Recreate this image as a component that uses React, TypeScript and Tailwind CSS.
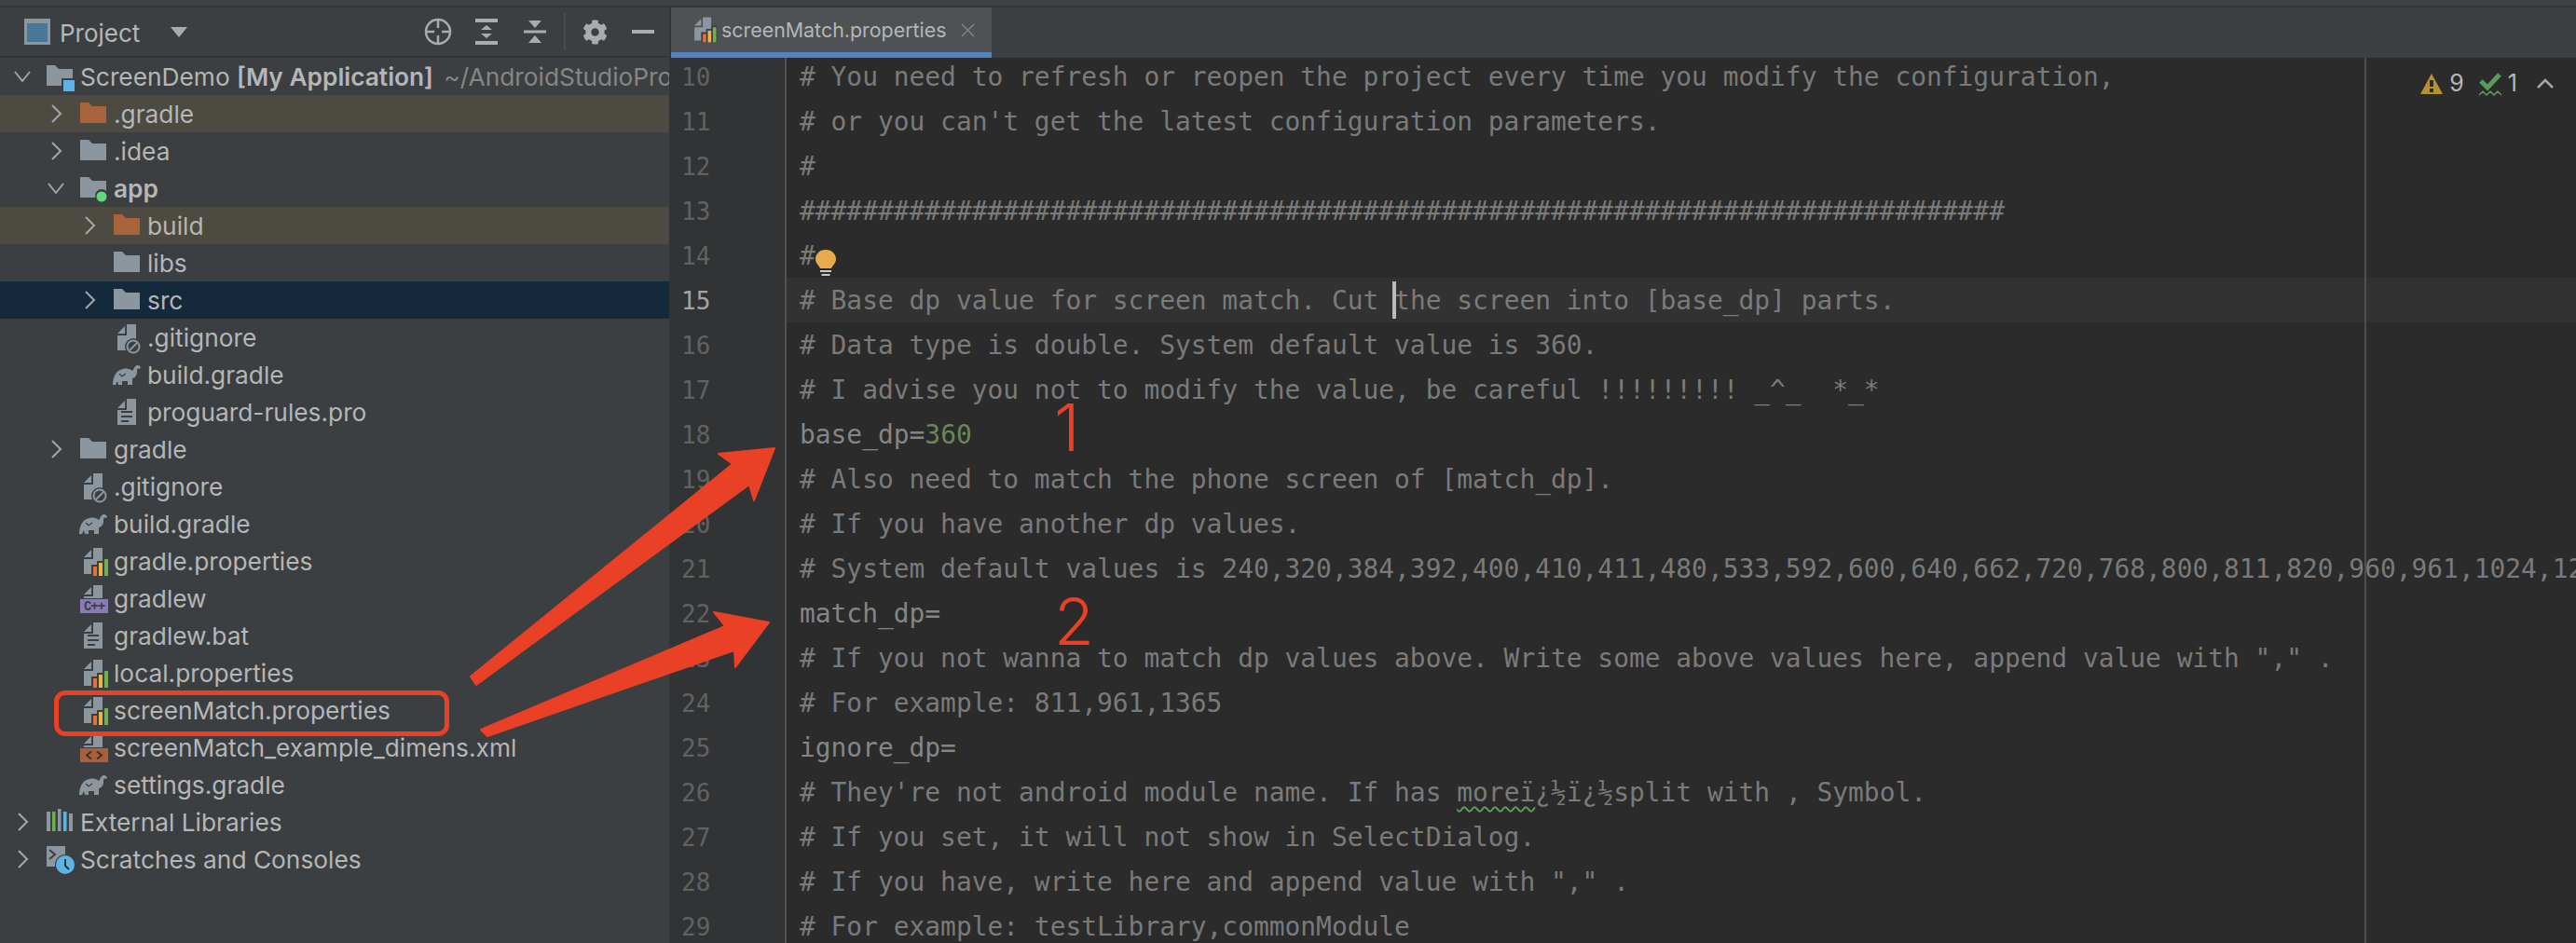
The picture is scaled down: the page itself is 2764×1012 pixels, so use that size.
import React from "react";
import { FaCog } from "react-icons/fa";

const G = "#8b969e";
const BG = "#3c3f41";

const Chevron = ({ open }: { open?: boolean }) => (
  <svg width="20" height="40" viewBox="0 0 20 40" className="shrink-0">
    {open ? (
      <path d="M2 15 L10 25 L18 15" fill="none" stroke="#a4a7aa" strokeWidth="2" />
    ) : (
      <path d="M6 12 L15 21 L6 30" fill="none" stroke="#a4a7aa" strokeWidth="2" transform="translate(0 -1)" />
    )}
  </svg>
);

const Box = ({ children }: { children: React.ReactNode }) => (
  <svg width="30" height="40" viewBox="0 0 30 40" className="shrink-0 overflow-visible">
    {children}
  </svg>
);

const folderPath = "M0 8 L9 8 L13 12 L28 12 L28 30 L0 30 Z";
const Folder = ({ color = G }: { color?: string }) => (
  <Box>
    <path d={folderPath} fill={color} />
  </Box>
);
const RootFolder = () => (
  <Box>
    <path d={folderPath} fill={G} />
    <rect x="16" y="22" width="14" height="16" fill={BG} />
    <rect x="18" y="24" width="12" height="12" fill="#5cb4e4" />
  </Box>
);
const AppFolder = () => (
  <Box>
    <path d={folderPath} fill={G} />
    <circle cx="23" cy="28" r="7" fill={BG} />
    <circle cx="23" cy="29" r="5.5" fill="#5fd97c" />
  </Box>
);

const fileBody = "M14 6 L24 6 L24 34 L4 34 L4 18 L14 18 Z";
const fold = "M4 16 L12 8 L12 16 Z";

const Props = () => (
  <Box>
    <path d={fileBody} fill={G} />
    <path d={fold} fill={G} />
    <path d="M12 36 L12 24 L18 24 L18 20 L24 20 L24 16 L31 16 L31 36 Z" fill={BG} />
    <rect x="14" y="26" width="4" height="10" fill="#e2703a" />
    <rect x="20" y="22" width="4" height="14" fill="#edb14f" />
    <rect x="26" y="18" width="4" height="18" fill="#6fb04f" />
  </Box>
);
const Ignore = () => (
  <Box>
    <path d={fileBody} fill={G} />
    <path d={fold} fill={G} />
    <circle cx="21" cy="30" r="9" fill={BG} />
    <circle cx="21" cy="30" r="6.5" fill="none" stroke={G} strokeWidth="2" />
    <path d="M17 34 L25 26" stroke={G} strokeWidth="2" />
  </Box>
);
const TextFile = () => (
  <Box>
    <path d={fileBody} fill={G} />
    <path d={fold} fill={G} />
    <path d="M8 20 H20 M8 25 H20 M8 30 H16" stroke={BG} strokeWidth="2" />
  </Box>
);
const Elephant = () => (
  <Box>
    <path
      d="M-1 31 C-1 22 3 15 10 14 C14 13 18 14 20 16 C22 14 22 11 25 10 C27 9.5 29 11 29 13 L27 14 C25 12 25 15 25 18 C25 21 22 24 20 24 L20 31 L15 31 L15 27 L9 27 L9 31 L5 31 L4 27 L2 31 Z"
      fill={G}
    />
    <path d="M6 19 L9 22 L13 19" fill="none" stroke={BG} strokeWidth="1.2" />
  </Box>
);
const Tagged = ({ color, children }: { color: string; children: React.ReactNode }) => (
  <Box>
    <path d="M14 6 L24 6 L24 20 L4 20 L4 18 L14 18 Z" fill={G} />
    <path d={fold} fill={G} />
    <rect x="0" y="21" width="30" height="15" fill={color} />
    {children}
  </Box>
);
const Cpp = () => (
  <Tagged color="#8a7bb8">
    <text x="15" y="33" textAnchor="middle" fontSize="14" fontWeight="700" fill="#3c3f41" fontFamily="'Liberation Mono', monospace" letterSpacing="-1">
      C++
    </text>
  </Tagged>
);
const Xml = () => (
  <Tagged color="#a9603a">
    <path d="M12 24.5 L7 28.5 L12 32.5 M18 24.5 L23 28.5 L18 32.5" fill="none" stroke="#3c2b22" strokeWidth="1.8" />
  </Tagged>
);
const Libs = () => (
  <Box>
    <rect x="0" y="9" width="4" height="21" fill={G} />
    <rect x="6" y="9" width="3.5" height="21" fill="#6fb04f" />
    <rect x="12" y="6" width="3.5" height="24" fill={G} />
    <rect x="18" y="9" width="3.5" height="21" fill="#5cb4e4" />
    <rect x="24" y="11" width="4" height="19" fill={G} />
  </Box>
);
const Scratch = () => (
  <Box>
    <rect x="0" y="6" width="20" height="22" fill={G} />
    <path d="M3 10 L9 15 L3 20" fill="none" stroke={BG} strokeWidth="2" />
    <circle cx="20" cy="26" r="11" fill={BG} />
    <circle cx="20" cy="26" r="10" fill="#5cb4e4" />
    <path d="M20 20 L20 27 L24 31" fill="none" stroke="#27343d" strokeWidth="2" />
  </Box>
);

type Row = {
  level: number;
  name: React.ReactNode;
  icon: React.ReactNode;
  chev?: "open" | "closed";
  tone?: "ignored" | "selected";
  bold?: boolean;
};

const rows: Row[] = [
  {
    level: 0,
    chev: "open",
    icon: <RootFolder />,
    name: (
      <>
        ScreenDemo <b className="font-semibold">[My Application]</b>{" "}
        <span className="ml-1 text-[#868686]">~/AndroidStudioProjects/ScreenDemo</span>
      </>
    ),
  },
  { level: 1, chev: "closed", icon: <Folder color="#a9633a" />, name: ".gradle", tone: "ignored" },
  { level: 1, chev: "closed", icon: <Folder />, name: ".idea" },
  { level: 1, chev: "open", icon: <AppFolder />, name: "app", bold: true },
  { level: 2, chev: "closed", icon: <Folder color="#a9633a" />, name: "build", tone: "ignored" },
  { level: 2, icon: <Folder />, name: "libs" },
  { level: 2, chev: "closed", icon: <Folder />, name: "src", tone: "selected" },
  { level: 2, icon: <Ignore />, name: ".gitignore" },
  { level: 2, icon: <Elephant />, name: "build.gradle" },
  { level: 2, icon: <TextFile />, name: "proguard-rules.pro" },
  { level: 1, chev: "closed", icon: <Folder />, name: "gradle" },
  { level: 1, icon: <Ignore />, name: ".gitignore" },
  { level: 1, icon: <Elephant />, name: "build.gradle" },
  { level: 1, icon: <Props />, name: "gradle.properties" },
  { level: 1, icon: <Cpp />, name: "gradlew" },
  { level: 1, icon: <TextFile />, name: "gradlew.bat" },
  { level: 1, icon: <Props />, name: "local.properties" },
  { level: 1, icon: <Props />, name: "screenMatch.properties" },
  { level: 1, icon: <Xml />, name: "screenMatch_example_dimens.xml" },
  { level: 1, icon: <Elephant />, name: "settings.gradle" },
  { level: 0, chev: "closed", icon: <Libs />, name: "External Libraries" },
  { level: 0, chev: "closed", icon: <Scratch />, name: "Scratches and Consoles" },
];

const pad = ["pl-[50px]", "pl-[86px]", "pl-[122px]"];

const TreeRow = ({ r }: { r: Row }) => (
  <div
    className={`relative flex h-10 items-center whitespace-nowrap ${pad[r.level]} ${
      r.tone === "ignored" ? "bg-[#4c4a41]" : r.tone === "selected" ? "bg-[#15293d]" : ""
    }`}
  >
    {r.chev && (
      <span className="absolute top-0 ml-[-36px]">
        <Chevron open={r.chev === "open"} />
      </span>
    )}
    {r.icon}
    <span className={`ml-[6px] pt-[2px] text-[26.3px] text-[#b4b6b8] ${r.bold ? "font-semibold" : ""}`}>{r.name}</span>
  </div>
);

const Setting = ({ children }: { children: React.ReactNode }) => <span className="text-[#858585]">{children}</span>;

const code: React.ReactNode[] = [
  "# You need to refresh or reopen the project every time you modify the configuration,",
  "# or you can't get the latest configuration parameters.",
  "#",
  "#".repeat(77),
  "#",
  <>
    # Base dp value for screen match. Cut <span className="relative"><span className="absolute left-[-2px] top-[-4px] h-10 w-[4px] bg-[#bbbbbb]" /></span>the screen into [base_dp] parts.
  </>,
  "# Data type is double. System default value is 360.",
  "# I advise you not to modify the value, be careful !!!!!!!!! _^_  *_*",
  <Setting>
    base_dp=<span className="text-[#6a8759]">360</span>
  </Setting>,
  "# Also need to match the phone screen of [match_dp].",
  "# If you have another dp values.",
  "# System default values is 240,320,384,392,400,410,411,480,533,592,600,640,662,720,768,800,811,820,960,961,1024,1280,1365",
  <Setting>match_dp=</Setting>,
  '# If you not wanna to match dp values above. Write some above values here, append value with "," .',
  "# For example: 811,961,1365",
  <Setting>ignore_dp=</Setting>,
  <>
    # They're not android module name. If has{" "}
    <span className="underline decoration-wavy decoration-[#5f9e5f] decoration-[1.5px] underline-offset-[5px]">moreï</span>¿½ï¿½split with , Symbol.
  </>,
  "# If you set, it will not show in SelectDialog.",
  '# If you have, write here and append value with "," .',
  "# For example: testLibrary,commonModule",
];

const Locate = () => (
  <svg width="30" height="30" viewBox="0 0 30 30" className="shrink-0">
    <circle cx="15" cy="15" r="13" fill="none" stroke="#a9acae" strokeWidth="2.5" />
    <path d="M15 2 V11 M15 19 V28 M2 15 H11 M19 15 H28" stroke="#a9acae" strokeWidth="2.5" />
  </svg>
);
const Expand = () => (
  <svg width="24" height="28" viewBox="0 0 24 28" className="shrink-0">
    <path d="M0 0 H24 V4 H0 Z M0 24 H24 V28 H0 Z M12 7 L18 12 H6 Z M12 21 L18 16 H6 Z" fill="#a9acae" />
  </svg>
);
const Collapse = () => (
  <svg width="24" height="24" viewBox="0 0 24 24" className="shrink-0">
    <path d="M0 10.5 H24 V13.5 H0 Z M5 0 H19 L12 8 Z M5 24 H19 L12 16 Z" fill="#a9acae" />
  </svg>
);

export default function App() {
  return (
    <div
      className="relative flex h-[1012px] w-[2764px] flex-col overflow-hidden bg-[#3c3f41]"
      style={{ fontFamily: "Inter, 'Noto Sans', sans-serif" }}
    >
      <div className="h-[6px] bg-[#3f4245]" />
      <div className="h-[2px] bg-[#323436]" />
      <div className="flex min-h-0 flex-1">
        {/* Project panel */}
        <aside className="flex w-[718px] shrink-0 flex-col overflow-hidden">
          <div className="flex h-[52px] shrink-0 items-center pl-[26px]">
            <span className="box-border h-7 w-7 border-[3px] border-t-[5px] border-[#8b969e] bg-[#47789a]" />
            <span className="ml-[10px] pt-[2px] text-[26px] text-[#b4b6b8]">Project</span>
            <span className="ml-[33px] h-0 w-0 border-x-[9px] border-t-[11px] border-x-transparent border-t-[#a9acae]" />
            <span className="ml-[254px]"><Locate /></span>
            <span className="ml-[25px]"><Expand /></span>
            <span className="ml-[28px]"><Collapse /></span>
            <span className="ml-[19px] h-10 w-[2px] bg-[#4b4e50]" />
            <span className="ml-[18px] text-[#a9acae]"><FaCog size={27} /></span>
            <span className="ml-[26px] h-1 w-6 bg-[#a9acae]" />
          </div>
          <div className="h-[2px] shrink-0 bg-[#323436]" />
          {rows.map((r, i) => (
            <TreeRow key={i} r={r} />
          ))}
        </aside>

        {/* Editor */}
        <main className="flex min-w-0 flex-1 flex-col">
          <div className="flex h-[54px] shrink-0 bg-[#3c3f41]">
            <div className="h-full w-[2px] bg-[#323436]" />
            <div className="box-border flex h-full w-[344px] items-center border-b-[6px] border-[#5282c2] bg-[#4e5254] pl-[20px]">
              <span className="mt-[-2px] h-10 w-[30px] shrink-0 scale-[0.9]"><Props /></span>
              <span className="ml-[4px] text-[21.4px] text-[#b4b6b8]">screenMatch.properties</span>
              <svg width="15" height="15" viewBox="0 0 15 15" className="ml-[16px] shrink-0">
                <path d="M1 1 L14 14 M14 1 L1 14" stroke="#7f8386" strokeWidth="1.5" />
              </svg>
            </div>
          </div>
          <div
            className="relative min-h-0 flex-1 overflow-hidden bg-[#2b2b2b] text-[#7a7a7a]"
            style={{ fontFamily: "'DejaVu Sans Mono', 'Liberation Mono', monospace" }}
          >
            <div className="mt-[-4px]">
              {code.map((c, i) => (
                <div key={i} className="flex h-12 leading-[48px]">
                  <div
                    className={`w-[126px] shrink-0 border-r-2 border-[#505254] bg-[#313335] pl-[13px] pt-px text-[26px] ${
                      i === 5 ? "text-[#a4a3a3]" : "text-[#5f6366]"
                    }`}
                  >
                    {i + 10}
                  </div>
                  <div className={`flex-1 whitespace-pre pl-[14px] pt-px text-[27.9px] ${i === 5 ? "bg-[#323232]" : ""}`}>
                    {c}
                  </div>
                </div>
              ))}
            </div>
            {/* Bulb over line 14 */}
            <svg width="22" height="30" viewBox="0 0 22 30" className="absolute left-[157px] top-[206px]">
              <path d="M11 0 C4 0 0 5 0 10 C0 15 4 17 5 20 H17 C18 17 22 15 22 10 C22 5 18 0 11 0 Z" fill="#e7ab4b" />
              <path d="M5 23 H17 M6.5 27 H15.5" stroke="#c9c9c9" strokeWidth="2" />
            </svg>
            {/* Right margin */}
            <div className="absolute bottom-0 left-[1819px] top-0 w-[2px] bg-[#4d4f51]" />
            {/* Inspection widget */}
            <div className="absolute right-[24px] top-[9px] flex items-center text-[25px] text-[#b4b6b8]" style={{ fontFamily: "Inter, sans-serif" }}>
              <svg width="24" height="22" viewBox="0 0 24 22">
                <path d="M12 0 L24 22 H0 Z" fill="#b8902f" />
                <rect x="10" y="7" width="4" height="7" fill="#2b2b2b" />
                <rect x="10" y="16" width="4" height="4" fill="#2b2b2b" />
              </svg>
              <span className="ml-[7px]">9</span>
              <svg width="24" height="26" viewBox="0 0 24 26" className="ml-[16px]">
                <path d="M2 10 L9 17 L22 3" fill="none" stroke="#5b9a5b" strokeWidth="5" />
                <path d="M0 25 L4 21 L8 25 L12 21 L16 25 L20 21 L24 25" fill="none" stroke="#5b9a5b" strokeWidth="1.5" />
              </svg>
              <span className="ml-[7px]">1</span>
              <svg width="18" height="12" viewBox="0 0 18 12" className="ml-[21px]">
                <path d="M1 10 L9 2 L17 10" fill="none" stroke="#a4a7aa" strokeWidth="2.5" />
              </svg>
            </div>
          </div>
        </main>
      </div>

      {/* Hand-drawn red annotations */}
      <svg className="pointer-events-none absolute inset-0" width="2764" height="1012" viewBox="0 0 2764 1012">
        <path
          d="M505 726 L786 498 L771 487 L831 481 L809 537 L804 520 L511 735 Z"
          fill="#ea4026"
          stroke="#ea4026"
          strokeWidth="2"
          strokeLinejoin="round"
        />
        <path
          d="M516 783 L778 672 L766 657 L825 668 L789 716 L788 698 L523 790 Z"
          fill="#ea4026"
          stroke="#ea4026"
          strokeWidth="2"
          strokeLinejoin="round"
        />
      </svg>
      <div className="pointer-events-none absolute left-[58px] top-[741px] h-[49px] w-[424px] rounded-[12px] border-[5px] border-[#ea4026]" />
      <span className="pointer-events-none absolute left-[1131px] top-[424px] text-[70px] font-light leading-none text-[#ea4026]">1</span>
      <span className="pointer-events-none absolute left-[1131px] top-[632px] text-[70px] font-light leading-none text-[#ea4026]">2</span>
    </div>
  );
}
